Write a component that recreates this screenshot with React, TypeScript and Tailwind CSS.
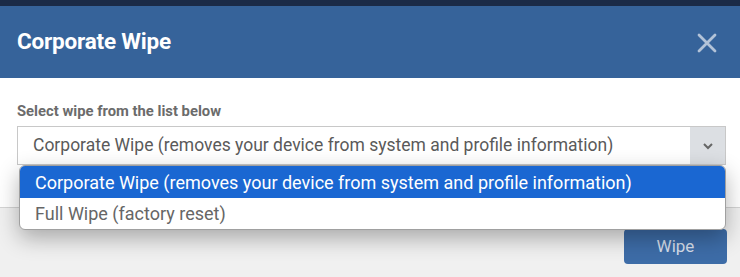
import React from "react";

export default function App() {
  const options = [
    "Corporate Wipe (removes your device from system and profile information)",
    "Full Wipe (factory reset)",
  ];

  return (
    <div className="w-[740px] h-[277px] overflow-hidden bg-[#1b2b47] pt-[6px] font-['Roboto',sans-serif]">
      <div className="bg-white rounded-tl-[5px] h-full flex flex-col">
        {/* header */}
        <div className="h-[72px] shrink-0 bg-[#36639a] flex items-center justify-between pl-[17px] pr-[23px]">
          <h2 className="text-[22.5px] font-bold text-white tracking-[-0.2px]">Corporate Wipe</h2>
          <svg width="20" height="20" viewBox="0 0 20 20" className="mt-[2px]">
            <path d="M2 2 L18 18 M18 2 L2 18" stroke="#b3c3d8" strokeWidth="2.8" strokeLinecap="round" />
          </svg>
        </div>

        {/* body */}
        <div className="pl-[17px] pr-[14px] pt-[24px] h-[130px] shrink-0 border-b border-[#d4d4d4]">
          <label className="block text-[14.8px] font-bold text-[#6b6b6b] leading-[18px] mb-[6px]">
            Select wipe from the list below
          </label>
          <div className="relative">
            <div className="h-[39px] border border-[#c8c8c8] flex items-stretch">
              <div className="flex-1 flex items-center pl-[15px] text-[17.5px] text-[#5a5a5a] whitespace-nowrap">{options[0]}</div>
              <div className="w-[35px] bg-[#dcdfe3] flex items-center justify-center">
                <svg width="12" height="8" viewBox="0 0 12 8">
                  <path d="M2 2 L6 6 L10 2" fill="none" stroke="#666" strokeWidth="2" />
                </svg>
              </div>
            </div>
            <div className="absolute left-[2px] right-0 top-[39px] z-10 bg-white border border-[#a0a0a0] rounded-[6px] overflow-hidden shadow-[0_8px_22px_rgba(0,0,0,0.3)]">
              <div className="h-[32px] bg-[#1a67d2] text-white text-[18px] flex items-center pl-[15px] whitespace-nowrap">{options[0]}</div>
              <div className="h-[31px] text-[#666] text-[18px] flex items-center pl-[15px]">{options[1]}</div>
            </div>
          </div>
        </div>

        {/* footer */}
        <div className="flex-1 bg-[#f0f0f0] flex justify-end pr-[13px] pt-[21px]">
          <button className="w-[103px] h-[35px] rounded-[4px] bg-[#3d6ca7] text-[#d6deea] text-[17px]">Wipe</button>
        </div>
      </div>
    </div>
  );
}
